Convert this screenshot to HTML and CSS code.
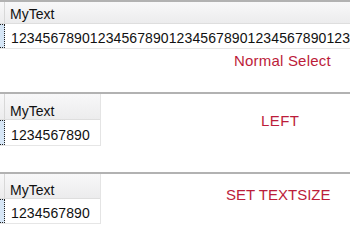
FILE: index.html
```html
<!DOCTYPE html>
<html lang="en">

<head>
    <meta charset="UTF-8">
    <title>MyText</title>
    <link rel="stylesheet" href="styles.css">
</head>

<body>
    <div class="shot shot-normal">
        <div class="grid grid-wide">
            <div class="row head">
                <div class="sel"></div>
                <div class="cell">MyText</div>
            </div>
            <div class="row data">
                <div class="sel focus"></div>
                <div class="cell">12345678901234567890123456789012345678901234567890</div>
            </div>
        </div>
        <div class="label">Normal Select</div>
    </div>

    <div class="shot shot-left">
        <div class="grid">
            <div class="row head">
                <div class="sel"></div>
                <div class="cell">MyText</div>
            </div>
            <div class="row data">
                <div class="sel focus"></div>
                <div class="cell">1234567890</div>
            </div>
        </div>
        <div class="label">LEFT</div>
    </div>

    <div class="shot shot-size">
        <div class="grid">
            <div class="row head">
                <div class="sel"></div>
                <div class="cell">MyText</div>
            </div>
            <div class="row data">
                <div class="sel focus"></div>
                <div class="cell">1234567890</div>
            </div>
        </div>
        <div class="label">SET TEXTSIZE</div>
    </div>
</body>

</html>
```

FILE: styles.css
```css
* {
    margin: 0;
    padding: 0;
    box-sizing: border-box;
}

body {
    width: 350px;
    height: 247px;
    overflow: hidden;
    background: #fff;
    font-family: "Liberation Sans", Arial, sans-serif;
    font-size: 14px;
    color: #111;
}

.shot {
    border-top: 2px solid #b2b2b2;
    overflow: hidden;
}

.shot-normal {
    height: 92px;
}

.shot-left,
.shot-size {
    display: flex;
    align-items: flex-start;
}

.shot-left {
    height: 80px;
}

.shot-size {
    height: 75px;
}

.grid {
    width: 101px;
    border-right: 1px solid #e4e4e4;
}

.grid-wide {
    width: 100%;
    border-right: none;
}

.row {
    display: flex;
    white-space: nowrap;
}

.head {
    background: linear-gradient(#f8f8f9, #ececed);
    border-bottom: 1px solid #dedede;
}

.data {
    border-bottom: 1px solid #e6e6e6;
}

.sel {
    width: 5px;
    flex: none;
    border-right: 1px solid #d8d8d8;
}

.sel.focus {
    background: #d6e6f6;
    border: 1px dotted #222;
    border-left: none;
}

.cell {
    flex: 1;
    line-height: 16px;
    padding-left: 5px;
    overflow: hidden;
}

.data .cell {
    padding-left: 6px;
    letter-spacing: 0.1px;
}

/* header / row heights differ a bit in each capture */
.shot-normal .head .cell {
    padding-top: 4px;
    padding-bottom: 1px;
}

.shot-normal .data .cell {
    padding-top: 6px;
    padding-bottom: 2px;
}

.shot-left .head .cell {
    padding-top: 9px;
    padding-bottom: 0;
}

.shot-left .data .cell {
    padding-top: 7px;
    padding-bottom: 2px;
}

.shot-size .head .cell {
    padding-top: 8px;
    padding-bottom: 0;
}

.shot-size .data .cell {
    padding-top: 6px;
    padding-bottom: 2px;
}

.label {
    font-size: 15px;
    line-height: 17px;
    color: #bc1c3a;
    white-space: nowrap;
}

.shot-normal .label {
    margin: 3px 0 0 234px;
    letter-spacing: 0.2px;
}

.shot-left .label {
    margin: 18px 0 0 160px;
    letter-spacing: 0.4px;
}

.shot-size .label {
    margin: 12px 0 0 125px;
}
```
